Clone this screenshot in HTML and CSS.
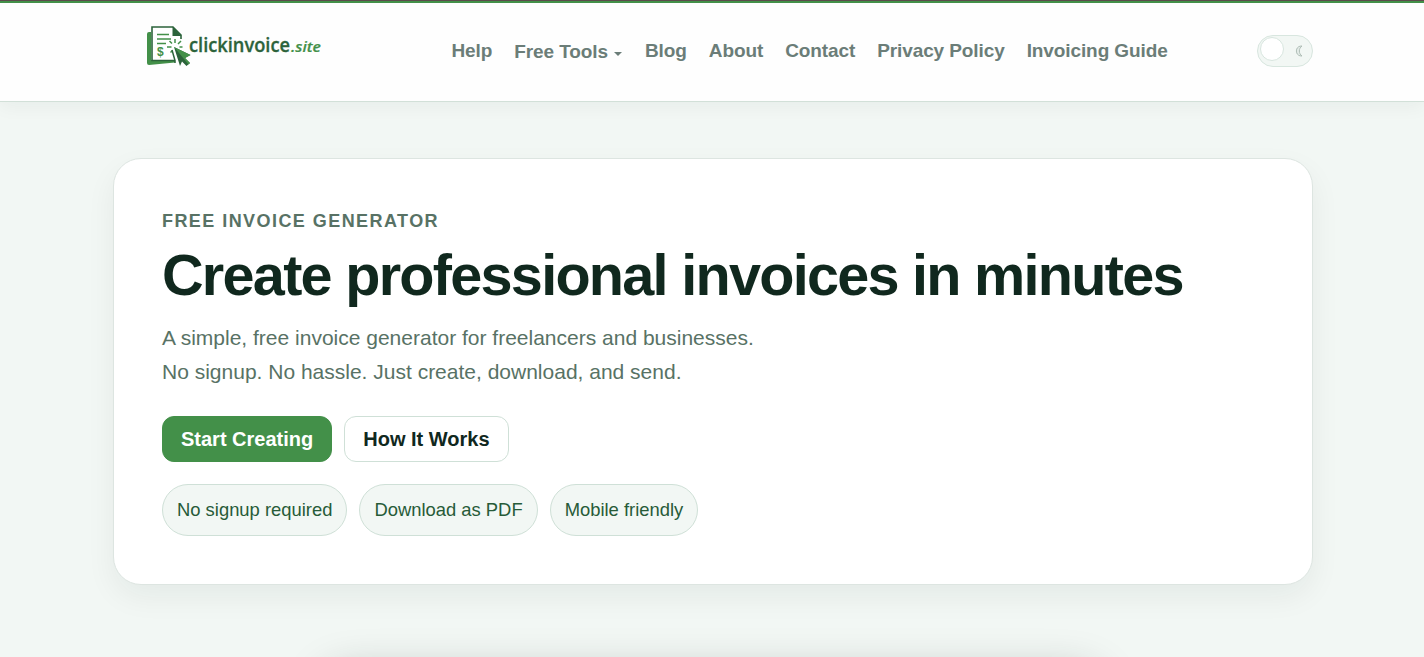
FILE: index.html
```
<!DOCTYPE html>
<html lang="en">
<head>
    <meta charset="UTF-8">
    <meta name="viewport" content="width=device-width, initial-scale=1.0">
    <title>Free Invoice Generator</title>
    <link rel="stylesheet" href="styles.css">
</head>
<body>
    <header class="site-header">
        <div class="header-inner">
            <a href="#" class="logo">
                <svg width="178" height="42" viewBox="0 0 178 42">
                    <path d="M5 7H3q-2 0-2 2v29q0 2 2 2l26-2.500V35H5z" fill="#439049"/>
                    <path d="M6 2h21l8 8v25.500H6z" fill="#fff"/>
                    <path d="M35 14v-4l-8-8H6v33.500h23" fill="none" stroke="#2c633b" stroke-width="1.600"/>
                    <path d="M26.500 1.500l9 9.500h-9z" fill="#2c633b"/>
                    <path d="M11 9.500h12M11 14h14M11 18.500h9" stroke="#439049" stroke-width="1.600"/>
                    <text x="11" y="31" class="logo-dollar">$</text>
                    <path d="M29 14v4M23.500 16l2.500 2.500M21 22h4.500M35 16l-3 3M24.500 27.500l2-2M33.500 22h3" stroke="#439049" stroke-width="1.500"/>
                    <path d="M26 25l3 10.500V38" fill="none" stroke="#2c633b" stroke-width="1.500"/>
                    <path d="M28 22l16.500 8-5.500 3 5 5-3.500 3-4.500-4.500-2 4.500z" fill="#2c633b"/>
                    <path d="M28 22l16.500 8-5.500 3 5 5-1.500 1.500z" fill="#439049"/>
                    <text x="43" y="27" textLength="101" lengthAdjust="spacingAndGlyphs" class="logo-name">clickinvoice</text>
                    <text x="145" y="27" textLength="30" lengthAdjust="spacingAndGlyphs" class="logo-tld">.site</text>
                </svg>
            </a>
            <nav class="nav">
                <a href="#">Help</a>
                <a href="#" class="dropdown">Free Tools</a>
                <a href="#">Blog</a>
                <a href="#">About</a>
                <a href="#">Contact</a>
                <a href="#">Privacy Policy</a>
                <a href="#">Invoicing Guide</a>
            </nav>
            <button class="theme-toggle" aria-label="Toggle theme">
                <span class="knob"></span>
                <svg class="moon" width="8" height="12" viewBox="0 0 8 12">
                    <path d="M7 1C-.5.500-.5 11.500 7 11 3.500 8.500 3.500 3.500 7 1z"/>
                </svg>
            </button>
        </div>
    </header>

    <main>
        <section class="hero">
            <p class="eyebrow">Free Invoice Generator</p>
            <h1>Create professional invoices in minutes</h1>
            <p class="lead">A simple, free invoice generator for freelancers and businesses.<br>No signup. No hassle. Just create, download, and send.</p>
            <div class="actions">
                <a href="#" class="btn btn-primary">Start Creating</a>
                <a href="#" class="btn btn-outline">How It Works</a>
            </div>
            <div class="chips">
                <span class="chip">No signup required</span>
                <span class="chip">Download as PDF</span>
                <span class="chip">Mobile friendly</span>
            </div>
        </section>
        <section class="invoice"></section>
    </main>
</body>
</html>
```
FILE: styles.css
```
* {
    box-sizing: border-box;
}
body {
    margin: 0;
    height: 100vh;
    overflow: hidden;
    background: #f2f7f4;
    font-family: "Liberation Sans", Arial, sans-serif;
    color: #10281e;
}
a {
    text-decoration: none;
}
.site-header {
    height: 102px;
    background: linear-gradient(#5c4a4c 1px, #439049 1px, #439049 3px, #fefefe 3px);
    border-bottom: 1px solid #d2e0d8;
    box-shadow: 0 4px 18px rgba(16, 40, 30, 0.05);
}
.header-inner {
    display: flex;
    width: 1167px;
    margin-left: 146px;
    padding-top: 25px;
}
.logo {
    width: 178px;
    height: 42px;
}
.logo svg {
    display: block;
}
.logo-dollar {
    font: bold 12px "Liberation Sans", sans-serif;
    fill: #439049;
}
.logo-name {
    font: 600 19px "Open Sans", sans-serif;
    fill: #2c633b;
    stroke: #2c633b;
    stroke-width: 0.300;
}
.logo-tld {
    font: italic 600 14px "Open Sans", sans-serif;
    fill: #439049;
    stroke: #439049;
    stroke-width: 0.200;
}
.nav {
    display: flex;
    gap: 22px;
    margin: 14px 0 0 127.500px;
    font-size: 19px;
    font-weight: bold;
    line-height: 24px;
    letter-spacing: -0.100px;
    white-space: nowrap;
}
.nav a {
    color: #6b7d78;
}
.nav .dropdown {
    padding-top: 1px;
}
.dropdown::after {
    content: "";
    display: inline-block;
    margin-left: 6px;
    vertical-align: 2px;
    border: 4.500px solid transparent;
    border-width: 4px 4.500px 0;
    border-top-color: #6b7d78;
    margin-right: 1px;
}
.theme-toggle {
    display: flex;
    align-items: center;
    justify-content: space-between;
    width: 56px;
    height: 32px;
    margin: 10px 0 0 auto;
    padding: 0 9px 0 2px;
    border: 1px solid #d8e6df;
    border-radius: 16px;
    background: #f2f7f4;
}
.knob {
    width: 24px;
    height: 24px;
    margin-top: -4px;
    border: 1px solid #d8e6df;
    border-radius: 50%;
    background: #fff;
}
.moon {
    fill: #e3ebe7;
    stroke: #a9b9b1;
    stroke-width: 0.900;
}
.hero {
    width: 1200px;
    height: 427px;
    margin: 56px 0 0 113px;
    padding: 48px;
    background: #fff;
    border: 1px solid #dde5e1;
    border-radius: 28px;
    box-shadow: 0 12px 30px rgba(16, 40, 30, 0.06);
}
.eyebrow {
    margin: 3px 0 0;
    font-size: 18px;
    font-weight: bold;
    line-height: 22px;
    letter-spacing: 1.440px;
    text-transform: uppercase;
    color: #587265;
}
h1 {
    margin: 11px 0 0;
    font-size: 57.600px;
    line-height: 64px;
    letter-spacing: -1.728px;
    white-space: nowrap;
}
.lead {
    margin: 14px 0 0;
    font-size: 21px;
    line-height: 34px;
    color: #587265;
}
.actions {
    display: flex;
    gap: 12px;
    margin-top: 27px;
}
.btn {
    height: 46px;
    padding: 0 18px;
    border: 1px solid #cfe0d7;
    border-radius: 12px;
    font-size: 20px;
    font-weight: bold;
    line-height: 44px;
    color: #10281e;
}
.btn-primary {
    background: #439049;
    border-color: #439049;
    color: #fff;
}
.chips {
    display: flex;
    gap: 12px;
    margin-top: 22px;
}
.chip {
    height: 52px;
    padding: 0 14px;
    border: 1px solid #cfe0d7;
    border-radius: 26px;
    background: #f2f7f4;
    font-size: 18.400px;
    line-height: 50px;
    color: #275b38;
}
.invoice {
    width: 780px;
    height: 400px;
    margin: 80px auto 0;
    background: #fff;
    border-radius: 28px;
    box-shadow: 0 6px 40px rgba(30, 40, 35, 0.250);
}
```
